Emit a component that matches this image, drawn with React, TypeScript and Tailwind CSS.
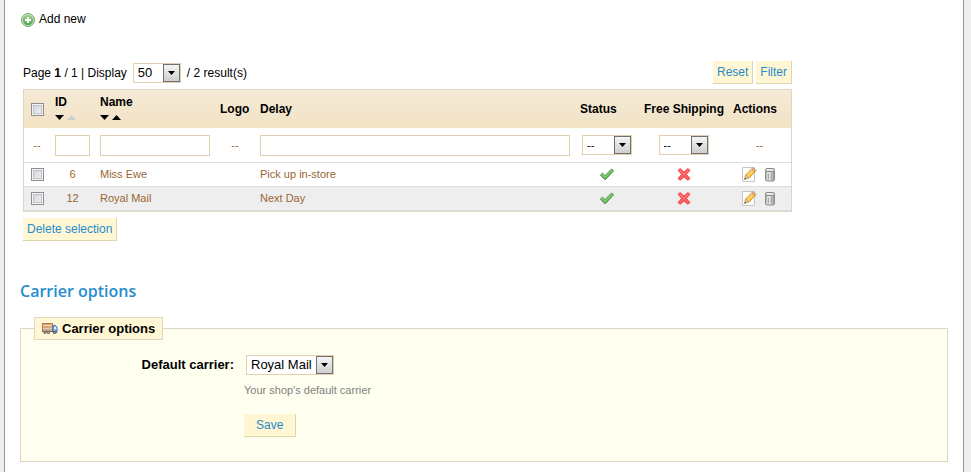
import type { ReactNode } from "react";

type Carrier = { id: number; name: string; delay: string };

const CARRIERS: Carrier[] = [
  { id: 6, name: "Miss Ewe", delay: "Pick up in-store" },
  { id: 12, name: "Royal Mail", delay: "Next Day" },
];

function AddIcon() {
  return (
    <svg width="16" height="16" viewBox="0 0 16 16" aria-hidden="true">
      <defs>
        <linearGradient id="add" x1="0" y1="0" x2="0" y2="1">
          <stop offset="0" stopColor="#a3d596" />
          <stop offset="1" stopColor="#4fa548" />
        </linearGradient>
      </defs>
      <circle cx="8" cy="9" r="6.5" fill="#cfe6ca" stroke="#6ea968" />
      <circle cx="8" cy="9" r="5.3" fill="url(#add)" />
      <path d="M7 6h2v2h2v2H9v2H7v-2H5V8h2z" fill="#fff" />
    </svg>
  );
}

function CheckIcon() {
  return (
    <svg width="16" height="16" viewBox="0 1 16 16" className="mx-auto block" aria-hidden="true">
      <path
        d="M1.4 9 3.4 7.2 6 9.6 12.6 3 14.6 4.8 6.8 13.4 5.4 13.4z"
        fill="#6cbd63"
        stroke="#4b9d4b"
        strokeLinejoin="round"
      />
      <path d="M2.8 8.8 3.4 8.2 6 10.8 12.8 4" fill="none" stroke="#96d48d" strokeWidth="0.8" />
    </svg>
  );
}

function CrossIcon() {
  return (
    <svg width="16" height="16" viewBox="0 1 16 16" className="mx-auto block" aria-hidden="true">
      <path
        d="M2 4.2 4.2 2.6 8 6 11.8 2.6 14 4.2 10.4 8.4 14 12.6 11.8 14.2 8 11 4.2 14.2 2 12.6 5.6 8.4z"
        fill="#fb5c5e"
        stroke="#f5484b"
        strokeLinejoin="round"
      />
      <path d="M3.4 4 8 8.4M12.6 4 8 8.4" stroke="#ff8d8e" />
    </svg>
  );
}

function EditIcon() {
  return (
    <svg width="16" height="16" viewBox="0 1 16 16" aria-hidden="true">
      <rect x="1.5" y="1.5" width="12" height="14" rx="0.5" fill="#fcfcfc" stroke="#c6c6c6" />
      <path d="M3.6 13.2 4.6 9 7.8 12.2z" fill="#f5d9ad" stroke="#b08952" strokeWidth="0.6" />
      <path d="M3.2 13.6 3.9 11.6 5.4 13z" fill="#444" />
      <path d="M4.6 9 10.8 2.9 13.9 6 7.8 12.2z" fill="#fbc94d" stroke="#bd8523" strokeWidth="0.8" />
      <path d="M6 9.4 11.4 4.1" stroke="#ffeaa4" />
      <path d="M10.8 2.9 12.4 1.6 15.2 4.4 13.9 6z" fill="#eab78f" stroke="#b5794f" strokeWidth="0.6" />
    </svg>
  );
}

function TrashIcon() {
  return (
    <svg width="16" height="16" viewBox="0 1 16 16" aria-hidden="true">
      <defs>
        <linearGradient id="bin" x1="0" y1="0" x2="1" y2="0">
          <stop offset="0" stopColor="#a8a8a8" />
          <stop offset="0.35" stopColor="#f0f0f0" />
          <stop offset="1" stopColor="#969696" />
        </linearGradient>
      </defs>
      <path d="M3.5 5h9v8.5c0 1.2-1 1.5-2 1.5h-5c-1 0-2-.3-2-1.5z" fill="url(#bin)" stroke="#8a8a8a" />
      <path d="M6.5 7.5v6M9.5 7.5v6" stroke="#a8a8a8" />
      <rect x="3.5" y="2.5" width="9" height="3" rx="1.5" fill="#e8e8e8" stroke="#8a8a8a" />
    </svg>
  );
}

function TruckIcon() {
  return (
    <svg width="16" height="16" viewBox="0 1 16 16" aria-hidden="true">
      <rect x="0.5" y="3.5" width="10" height="8" fill="#dba676" stroke="#b27a48" />
      <path d="M1 5.5h9" stroke="#f3d9b8" />
      <path d="M1 8.5h9" stroke="#c3d3d8" />
      <path d="M11 5.5h2.5l1.5 2v5h-4z" fill="#6ba1e2" stroke="#3a70b8" />
      <path d="M12 6.5h1.3L14.4 8v1.5H12z" fill="#e8f3fc" />
      <path d="M0 11.5h11" stroke="#666" />
      <circle cx="3" cy="12.5" r="1.5" fill="#666" />
      <circle cx="6.5" cy="12.5" r="1.5" fill="#666" />
      <circle cx="12.5" cy="12.5" r="1.5" fill="#555" />
      <path d="M2.5 12.5h1M6 12.5h1M12 12.5h1" stroke="#bbb" />
    </svg>
  );
}

function Button({ children, className = "px-1" }: { children: ReactNode; className?: string }) {
  return (
    <button
      type="button"
      className={`h-[23px] border-r border-b border-[#dfd5ac] bg-[#fff6d3] text-xs leading-[22px] text-[#268ccd] ${className}`}
    >
      {children}
    </button>
  );
}

function Select({
  label,
  id,
  options,
  className,
}: {
  label?: string;
  id?: string;
  options: string[];
  className: string;
}) {
  return (
    <span className="relative inline-block align-middle">
      <select
        id={id}
        aria-label={label}
        className={`block h-5 appearance-none border border-[#e0d0b1] bg-white pl-1 leading-[18px] text-black ${className}`}
      >
        {options.map((o) => (
          <option key={o}>{o}</option>
        ))}
      </select>
      <span className="pointer-events-none absolute inset-y-px right-px flex w-[17px] items-center justify-center border border-[#707070] bg-linear-to-b from-[#f4f4f4] to-[#cfcfcf]">
        <svg width="7" height="4" viewBox="0 0 7 4" aria-hidden="true">
          <path d="M0 0h7L3.5 4z" fill="#000" />
        </svg>
      </span>
    </span>
  );
}

function Checkbox({ label }: { label: string }) {
  return (
    <input
      type="checkbox"
      aria-label={label}
      className="mx-auto block size-[13px] appearance-none border border-[#8e8f8f] bg-linear-to-br from-[#cbcfd5] to-[#f6f6f6] shadow-[inset_0_0_0_1px_#f4f4f4,inset_0_0_0_2px_#c0c4ca] checked:bg-[#4b6fa0]"
    />
  );
}

function SortArrows({ column, upColor = "#000" }: { column: string; upColor?: string }) {
  return (
    <span className="flex h-3.5 items-center gap-[3px]">
      <button type="button" aria-label={`Sort ${column} descending`}>
        <svg width="9" height="5" viewBox="0 0 9 5" className="block">
          <path d="M0 0h9L4.5 5z" fill="#000" />
        </svg>
      </button>
      <button type="button" aria-label={`Sort ${column} ascending`}>
        <svg width="9" height="5" viewBox="0 0 9 5" className="block">
          <path d="M0 5h9L4.5 0z" fill={upColor} />
        </svg>
      </button>
    </span>
  );
}

function TextFilter({ label }: { label: string }) {
  return <input type="text" aria-label={label} className="block h-[21px] w-full border border-[#e0d0b1] bg-white px-1" />;
}

function CarrierTable() {
  return (
    <table className="w-full table-fixed border-separate border-spacing-0 border border-[#dfd5c3] text-[11px] text-[#996633]">
      <colgroup>
        <col className="w-[26px]" />
        <col className="w-[45px]" />
        <col className="w-[120px]" />
        <col className="w-10" />
        <col />
        <col className="w-16" />
        <col className="w-[89px]" />
        <col className="w-[63px]" />
      </colgroup>
      <thead>
        <tr className="h-[38px] bg-linear-to-b from-[#f5ead6] to-[#f2e3c5] text-left text-xs text-black">
          <th>
            <Checkbox label="Select all" />
          </th>
          <th className="px-[5px]">
            ID
            <SortArrows column="ID" upColor="#ccc" />
          </th>
          <th className="px-[5px]">
            Name
            <SortArrows column="Name" />
          </th>
          <th className="px-[5px]">Logo</th>
          <th className="px-[5px]">Delay</th>
          <th className="px-[5px]">Status</th>
          <th className="px-[5px] whitespace-nowrap">Free Shipping</th>
          <th className="px-[5px]">Actions</th>
        </tr>
      </thead>
      <tbody>
        <tr className="h-[35px] text-center [&>td]:border-b [&>td]:border-[#dedede]">
          <td>--</td>
          <td className="px-[5px]">
            <TextFilter label="Filter by ID" />
          </td>
          <td className="px-[5px]">
            <TextFilter label="Filter by name" />
          </td>
          <td>--</td>
          <td className="px-[5px]">
            <TextFilter label="Filter by delay" />
          </td>
          <td>
            <Select label="Filter by status" options={["--", "Yes", "No"]} className="w-[50px]" />
          </td>
          <td>
            <Select label="Filter by free shipping" options={["--", "Yes", "No"]} className="w-[50px]" />
          </td>
          <td>--</td>
        </tr>
        {CARRIERS.map((c) => (
          <tr key={c.id} className="h-6 odd:bg-[#eee] even:bg-white [&>td]:border-b [&>td]:border-[#dedede]">
            <td>
              <Checkbox label={`Select ${c.name}`} />
            </td>
            <td className="text-center">{c.id}</td>
            <td className="px-[5px]">{c.name}</td>
            <td />
            <td className="px-[5px]">{c.delay}</td>
            <td>
              <CheckIcon />
            </td>
            <td>
              <CrossIcon />
            </td>
            <td>
              <span className="flex justify-center gap-[5px]">
                <button type="button" aria-label={`Edit ${c.name}`}>
                  <EditIcon />
                </button>
                <button type="button" aria-label={`Delete ${c.name}`}>
                  <TrashIcon />
                </button>
              </span>
            </td>
          </tr>
        ))}
      </tbody>
    </table>
  );
}

export default function App() {
  return (
    <div className="min-h-screen bg-[#eee] pr-[7px] pl-1 font-['Liberation_Sans',Arial,sans-serif] text-xs text-black">
      <main className="min-h-screen border-x border-[#999] bg-white px-[15px] pt-[9px] pb-[10px]">
        <a href="#add" className="flex h-5 w-fit items-center gap-[3px]">
          <AddIcon />
          Add new
        </a>

        <section className="mt-8 ml-[3px] max-w-[769px]">
          <div className="flex h-[23px] items-center justify-between">
            <div className="flex items-center gap-1.5">
              <span>
                Page <b>1</b> / 1 | Display
              </span>
              <Select label="Results per page" options={["50", "20", "100", "300"]} className="w-12 text-[13px]" />
              <span>/ 2 result(s)</span>
            </div>
            <div className="flex gap-[3px]">
              <Button>Reset</Button>
              <Button>Filter</Button>
            </div>
          </div>
          <div className="mt-[5px] mb-1.5">
            <CarrierTable />
          </div>
          <Button>Delete selection</Button>
        </section>

        <h2 className="mt-[38px] font-['Open_Sans','Noto_Sans',sans-serif] text-base leading-6 font-semibold text-[#268ccd]">
          Carrier options
        </h2>

        <fieldset className="mt-[14px] border border-[#dfd5c3] bg-[#fffff0] px-[13px] pb-6">
          <legend className="flex h-[23px] items-center gap-1 border border-[#dfd5c3] bg-[#fff6d3] px-[7px] text-[13px] font-bold">
            <TruckIcon />
            Carrier options
          </legend>
          <div className="grid grid-cols-[200px_1fr] gap-x-[10px] pt-[15px]">
            <label htmlFor="default-carrier" className="text-right text-[13px] leading-5 font-bold">
              Default carrier:
            </label>
            <div>
              <div className="flex pl-0.5">
                <Select id="default-carrier" options={["Royal Mail", "Miss Ewe"]} className="w-[88px] text-[13px]" />
              </div>
              <p className="mt-[7px] text-[11px] leading-4 text-[#7f7f7f]">Your shop's default carrier</p>
              <div className="mt-4 flex">
                <Button className="px-3">Save</Button>
              </div>
            </div>
          </div>
        </fieldset>
      </main>
    </div>
  );
}
